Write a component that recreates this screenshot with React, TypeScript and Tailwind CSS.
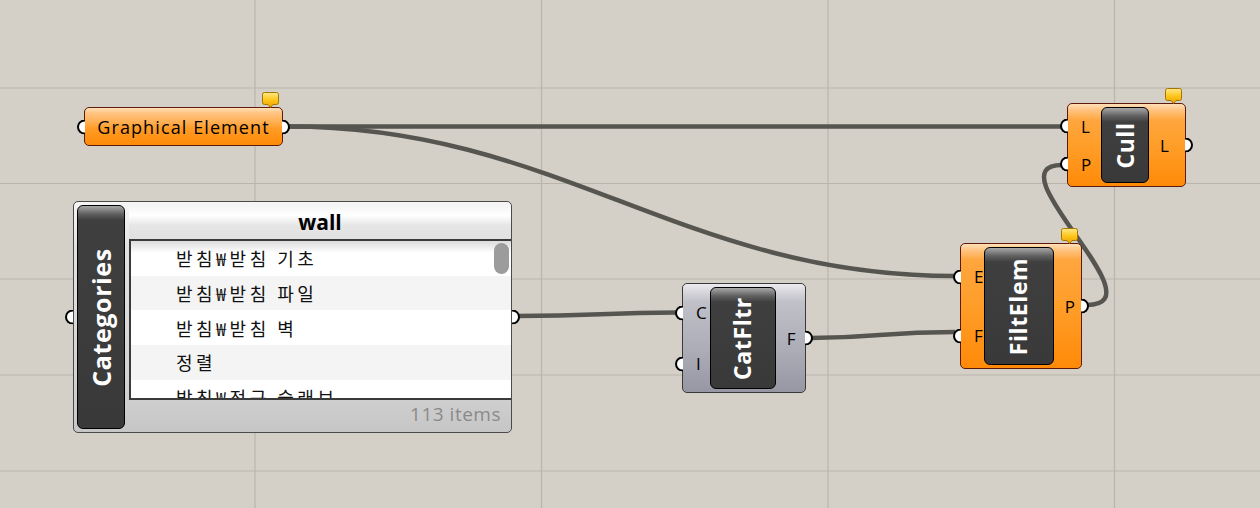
import React from 'react';

const font = 'font-["Open_Sans","Noto_Sans","Noto_Sans_CJK_KR",sans-serif]';

const Grip = ({ side }: { side: 'in' | 'out' }) =>
  side === 'in' ? (
    <span className="absolute left-[-8px] top-1/2 -translate-y-1/2 w-[8px] h-[15px] rounded-l-full border-[2.5px] border-r-0 border-black bg-white" />
  ) : (
    <span className="absolute right-[-8px] top-1/2 -translate-y-1/2 w-[8px] h-[15px] rounded-r-full border-[2.5px] border-l-0 border-black bg-white" />
  );

const Balloon = () => (
  <svg className="absolute right-[3px] top-[-16px]" width="17" height="17" viewBox="0 0 17 17">
    <defs>
      <linearGradient id="bl" x1="0" y1="0" x2="0" y2="1">
        <stop offset="0" stopColor="#ffe98a" />
        <stop offset="0.5" stopColor="#ffc61a" />
        <stop offset="1" stopColor="#e8a200" />
      </linearGradient>
    </defs>
    <path d="M2.5 0.5 H14.5 A2 2 0 0 1 16.5 2.5 V10.5 A2 2 0 0 1 14.5 12.5 H11 L8.5 15.5 L6 12.5 H2.5 A2 2 0 0 1 0.5 10.5 V2.5 A2 2 0 0 1 2.5 0.5 Z" fill="url(#bl)" stroke="#a87400" strokeWidth="1" />
  </svg>
);

const Pill = ({ label, size }: { label: string; size: string }) => (
  <div className="relative h-full rounded-[6px] border-[1.5px] border-black bg-[linear-gradient(to_bottom,#a8a8a8_0px,#606060_8px,#3f3f3f_14px,#393939_100%)] flex items-center justify-center overflow-hidden">
    <span className={`${font} -rotate-90 whitespace-nowrap text-white font-bold ${size} tracking-[0.6px] leading-none`}>{label}</span>
  </div>
);

type CompProps = {
  name: string;
  ins: string[];
  outs: string[];
  className: string;
  orange?: boolean;
  inW: string;
  outW: string;
  balloon?: boolean;
};

const Component = ({ name, ins, outs, className, orange, inW, outW, balloon }: CompProps) => (
  <div
    className={`absolute flex rounded-[5px] border-[1.5px] py-[3px] ${
      orange
        ? 'border-[#5e1a0a] bg-[linear-gradient(to_bottom,#ffe0b8_0px,#ffc482_6px,#ffa63e_16px,#ff9c26_55%,#ff8a08_100%)]'
        : 'border-[#3a3a3a] bg-[linear-gradient(to_bottom,#ececf0_0px,#d6d6dc_8px,#c0c0c8_18px,#adadb8_60%,#9797a4_100%)]'
    } ${className}`}
  >
    {balloon && <Balloon />}
    <div className={`flex flex-col justify-around ${inW}`}>
      {ins.map((p) => (
        <div key={p} className="relative flex-1 flex items-center">
          <Grip side="in" />
          <span className={`${font} text-[17px] text-black pl-[13px] leading-none`}>{p}</span>
        </div>
      ))}
    </div>
    <Pill label={name} size="text-[23px]" />
    <div className={`flex flex-col justify-around ${outW}`}>
      {outs.map((p) => (
        <div key={p} className="relative flex-1 flex items-center">
          <Grip side="out" />
          <span className={`${font} text-[17px] text-black pl-[11px] leading-none`}>{p}</span>
        </div>
      ))}
    </div>
  </div>
);

const rows = ['받침₩받침 기초', '받침₩받침 파일', '받침₩받침 벽', '정렬', '받침₩전근 슬래브'];

const Wires = () => (
  <svg className="absolute inset-0" width="1260" height="508" viewBox="0 0 1260 508">
    {[255, 541.5, 828, 1114.5].map((x) => (
      <line key={x} x1={x} y1="0" x2={x} y2="508" stroke="#b9b5ad" strokeWidth="1.2" />
    ))}
    {[88, 183.5, 279, 375, 471].map((y) => (
      <line key={y} x1="0" y1={y} x2="1260" y2={y} stroke="#b9b5ad" strokeWidth="1.2" />
    ))}
    <g fill="none" stroke="#56554f" strokeWidth="4.5">
      <path d="M288 126.5 L1062 126.5" />
      <path d="M288 126.5 C 560 126.5, 680 276, 955 276" />
      <path d="M517 316 C 600 316, 600 312.5, 677 312.5" />
      <path d="M811 338 C 880 338, 880 332, 955 332" />
      <path d="M1087 305 C 1162 305, 990 165, 1062 165" />
    </g>
  </svg>
);

export default function App() {
  return (
    <div className="relative w-[1260px] h-[508px] overflow-hidden bg-[#d4d0c8]">
      <Wires />

      {/* Graphical Element param */}
      <div className="absolute left-[84px] top-[107px] w-[199px] h-[39px] rounded-[5px] border-[1.5px] border-[#5e1a0a] bg-[linear-gradient(to_bottom,#ffe0b8_0px,#ffc482_5px,#ffaa48_16px,#ff9c26_55%,#ff8a08_100%)] flex items-center justify-center">
        <Balloon />
        <Grip side="in" />
        <span className={`${font} text-[18px] tracking-[1.1px] text-black leading-none`}>Graphical Element</span>
        <Grip side="out" />
      </div>

      {/* Categories value list */}
      <div className="absolute left-[73px] top-[201px] w-[439px] h-[232px] rounded-[5px] border-[1.5px] border-[#4a4a4a] bg-[linear-gradient(to_bottom,#f6f6f6_0%,#e2e2e2_20%,#d2d2d2_80%,#c6c6c6_100%)] flex p-[3px] pr-0">
        <span className="absolute left-[-9px] top-1/2 -translate-y-1/2 w-[8px] h-[15px] rounded-l-full border-[2.5px] border-r-0 border-black bg-white" />
        <span className="absolute right-[-9px] top-1/2 -translate-y-1/2 w-[8px] h-[15px] rounded-r-full border-[2.5px] border-l-0 border-black bg-white" />
        <div className="w-[48px] h-full">
          <Pill label="Categories" size="text-[25px]" />
        </div>
        <div className="flex-1 flex flex-col pl-[4px]">
          <div className="h-[34px] flex items-center justify-center bg-[linear-gradient(to_bottom,#f4f4f4_0%,#ffffff_30%,#e6e6e6_60%,#e0e0e0_100%)]">
            <span className={`${font} font-bold text-[21px] text-black leading-none`}>wall</span>
          </div>
          <div className="relative h-[161px] border-2 border-r-0 border-[#3a3a3a] bg-white overflow-hidden">
            {rows.map((r, i) => (
              <div
                key={r}
                className={`h-[34.7px] flex items-center pl-[45px] ${
                  i === 0
                    ? 'bg-[linear-gradient(to_bottom,#dcdcdc_0px,#ffffff_12px)]'
                    : i % 2 === 1
                    ? 'bg-[#f4f4f4]'
                    : 'bg-white'
                }`}
              >
                <span className='font-["Noto_Sans_CJK_KR",sans-serif] text-[18px] tracking-[3.5px] text-[#111] leading-none whitespace-nowrap'>{r}</span>
              </div>
            ))}
            <div className="absolute right-[2px] top-[2px] w-[15px] h-[31px] rounded-full bg-[#9c9c9c]" />
          </div>
          <div className="flex-1 flex items-center justify-end pr-[10px]">
            <span className={`${font} text-[19px] text-[#8a8a8a] leading-none tracking-[0.5px]`}>113 items</span>
          </div>
        </div>
      </div>

      <Component name="CatFltr" ins={['C', 'I']} outs={['F']} className="left-[682px] top-[283px] w-[124px] h-[110px]" inW="w-[35px]" outW="w-[38px]" />
      <Component name="FiltElem" ins={['E', 'F']} outs={['P']} orange balloon className="left-[960px] top-[243px] w-[122px] h-[126px]" inW="w-[33px]" outW="w-[39px]" />
      <Component name="Cull" ins={['L', 'P']} outs={['L']} orange balloon className="left-[1067px] top-[103px] w-[119px] h-[84px]" inW="w-[33px]" outW="w-[36px]" />
    </div>
  );
}
